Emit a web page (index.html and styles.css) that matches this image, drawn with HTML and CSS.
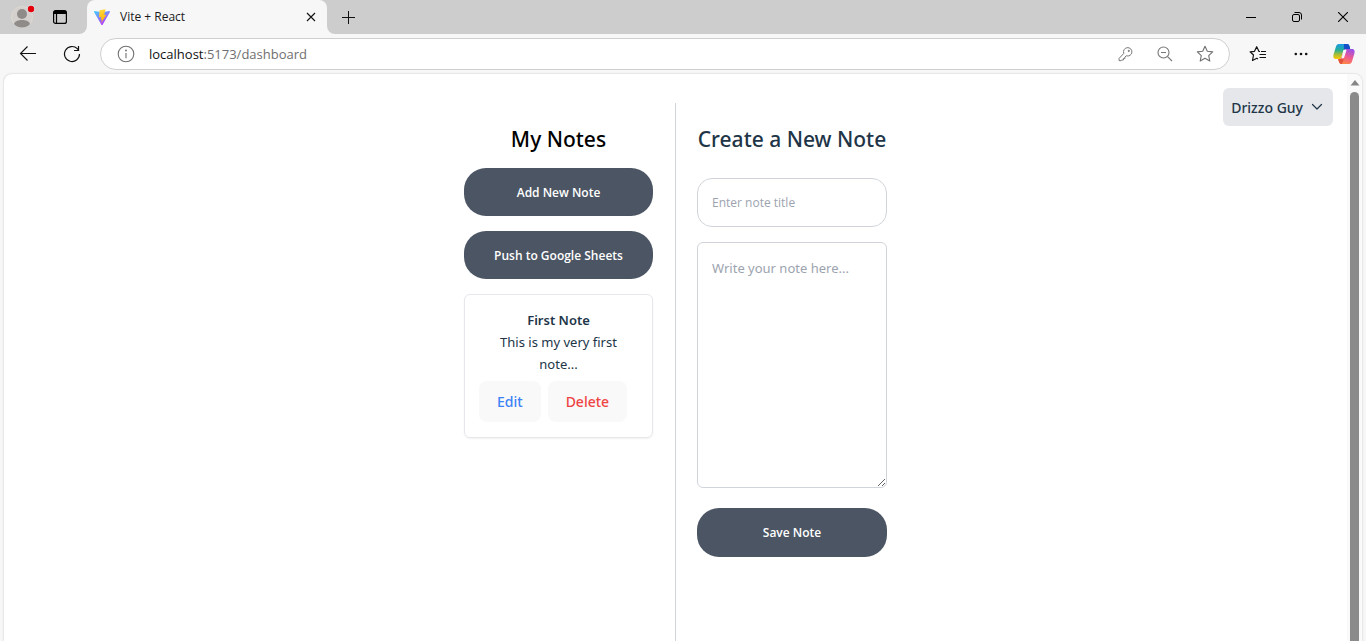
FILE: index.html
```html
<!DOCTYPE html>
<html lang="en">
<head>
<meta charset="utf-8">
<meta name="viewport" content="width=device-width, initial-scale=1">
<title>Vite + React</title>
<link rel="stylesheet" href="styles.css">
</head>
<body>
<div class="browser">
  <header class="tabstrip">
    <div class="tabstrip-tools">
      <button class="icon-btn profile" aria-label="Profile">
        <svg width="24" height="24" viewBox="0 0 24 24"><circle cx="11" cy="13" r="10.500" fill="#d3d0cd" stroke="#dfd9d2"/><circle cx="11" cy="10" r="5" fill="#8f8b88"/><path d="M3 20c1-3 4-4 8-4s7 1 8 4c-2 2-4 3.500-8 3.500S5 22 3 20z" fill="#8f8b88"/><circle cx="20" cy="5" r="4" fill="#dcdcdc"/><circle cx="20" cy="5" r="3.200" fill="#e3000b"/></svg>
      </button>
      <button class="icon-btn" aria-label="Tab actions">
        <svg width="16" height="16" viewBox="0 0 16 16"><rect x="1.600" y="1.600" width="12.800" height="12.800" rx="2" fill="none" stroke="#000" stroke-width="1.200"/><path d="M1.500 5V3.500a2 2 0 0 1 2-2h9a2 2 0 0 1 2 2V5z"/><path d="M4.500 5v9.500" stroke="#000" stroke-width="1.200"/></svg>
      </button>
    </div>
    <div class="tab">
      <svg width="16" height="16" viewBox="0 0 32 32">
        <defs>
          <linearGradient id="vite-a" x1="0" y1="0" x2=".6" y2="1"><stop stop-color="#41d1ff"/><stop offset="1" stop-color="#bd34fe"/></linearGradient>
          <linearGradient id="vite-b" x1=".4" y1="0" x2=".6" y2="1"><stop stop-color="#ffd83a"/><stop offset=".3" stop-color="#ffcc2b"/><stop offset="1" stop-color="#ffa800"/></linearGradient>
        </defs>
        <path d="M31.900 5.900 17 32q-1 1-2 0L.1 5.900Q-.3 4.200 1.600 4L16 6.500 30.400 4q1.900.2 1.500 1.900z" fill="url(#vite-a)"/>
        <path d="m23 .5-12 2.200-1 14 4.500-.9-1.200 5.800 3-.8-2.200 7.700 10.600-17-4.400.7z" fill="url(#vite-b)"/>
      </svg>
      <span class="tab-title">Vite + React</span>
      <button class="icon-btn tab-close" aria-label="Close tab"><svg width="10" height="10" viewBox="0 0 10 10" fill="none" stroke="#111" stroke-width="1.100"><path d="m1 1 8 8M9 1 1 9"/></svg></button>
    </div>
    <button class="icon-btn new-tab" aria-label="New tab"><svg width="13" height="13" viewBox="0 0 13 13" fill="none" stroke="#111"><path d="M6.500 0v13M0 6.500h13"/></svg></button>
    <div class="window-controls">
      <button class="icon-btn" aria-label="Minimize"><svg width="10" height="10" viewBox="0 0 10 10" stroke="#000"><path d="M0 5.500h10"/></svg></button>
      <button class="icon-btn" aria-label="Restore"><svg width="10" height="10" viewBox="0 0 10 10" fill="none" stroke="#000"><rect x=".5" y="2.500" width="7" height="7" rx="1.500"/><path d="M2.500.5H7A2.500 2.500 0 0 1 9.500 3v4.500"/></svg></button>
      <button class="icon-btn" aria-label="Close window"><svg width="10" height="10" viewBox="0 0 10 10" stroke="#000" stroke-width="1.100"><path d="m0 0 10 10M10 0 0 10"/></svg></button>
    </div>
  </header>

  <nav class="toolbar" aria-label="Browser toolbar">
    <button class="icon-btn nav-btn" aria-label="Back"><svg width="18" height="16" viewBox="0 0 18 16" fill="none" stroke="#111" stroke-width="1.100"><path d="M17 7.500H1.500M8.500.5l-7 7 7 7"/></svg></button>
    <button class="icon-btn nav-btn" aria-label="Refresh"><svg width="18" height="18" viewBox="0 0 18 18" fill="none" stroke="#111" stroke-width="1.200"><path d="M16.500 9A7.500 7.500 0 1 1 14.300 3.700L16 5.500M15.500 1v4.500H11"/></svg></button>
    <div class="address">
      <button class="icon-btn" aria-label="Site information"><svg width="18" height="18" viewBox="0 0 18 18" fill="none" stroke="#707070" stroke-width="1.100"><circle cx="9" cy="9" r="7.800"/><path d="M9 8v5.200"/><circle cx="9" cy="5.500" r=".4" fill="#707070"/></svg></button>
      <span class="url"><span class="url-host">localhost</span>:5173/dashboard</span>
      <div class="address-actions">
        <button class="icon-btn" aria-label="Saved passwords"><svg width="16" height="16" viewBox="0 0 16 16" fill="none" stroke="#777"><path d="M5.800 7.400A4.200 4.200 0 1 1 8.300 9.800L6.900 11v1.500H5.400V14H3.800l-.7.700H1.100v-2.300z" stroke-linejoin="round"/><circle cx="10.800" cy="4.900" r=".6" fill="#777"/></svg></button>
        <button class="icon-btn" aria-label="Zoom"><svg width="16" height="16" viewBox="0 0 16 16" fill="none" stroke="#777" stroke-width="1.100"><circle cx="6.500" cy="6.500" r="5.500"/><path d="m10.600 10.600 4.400 4.400M4 6.500h5"/></svg></button>
        <button class="icon-btn" aria-label="Add to favorites"><svg width="18" height="18" viewBox="0 0 18 18" fill="none" stroke="#707070" stroke-width="1.100" stroke-linejoin="round"><path d="m9 1.300 2.300 5 5.400.6-4 3.700 1.100 5.400L9 13.300 4.200 16l1.100-5.400-4-3.700 5.400-.6z"/></svg></button>
      </div>
    </div>
    <div class="toolbar-actions">
      <button class="icon-btn" aria-label="Favorites"><svg width="18" height="18" viewBox="0 0 18 18" fill="none" stroke="#111" stroke-width="1.200" stroke-linejoin="round"><path d="M11 6.500H10L7.700 1.700 5.500 6.300l-4.400.5L4.500 10l-1 5.500 4.300-2.200 1.200.7M12 6.500h5M10.500 9.500H17M10.500 12.500H17"/></svg></button>
      <button class="icon-btn" aria-label="Settings and more"><svg width="18" height="4" viewBox="0 0 18 4" fill="#111"><circle cx="4.800" cy="2" r="1.300"/><circle cx="10" cy="2" r="1.300"/><circle cx="15.200" cy="2" r="1.300"/></svg></button>
      <button class="icon-btn" aria-label="Copilot">
        <svg width="22" height="22" viewBox="0 0 22 22">
          <defs>
            <linearGradient id="cp-a" x1="0" y1="0" x2="0" y2="1"><stop stop-color="#1b9ae8"/><stop offset=".4" stop-color="#25ae96"/><stop offset=".7" stop-color="#a8bd35"/><stop offset="1" stop-color="#ffc900"/></linearGradient>
            <linearGradient id="cp-b" x1=".7" y1="0" x2=".3" y2="1"><stop stop-color="#9a50e8"/><stop offset=".5" stop-color="#ee5a91"/><stop offset="1" stop-color="#ff8b3e"/></linearGradient>
          </defs>
          <path d="M6 1h8c2 0 2.600 1.500 3.200 5H13c-2 0-2.500 1-3 3l-1.600 5c-.5 1.500-1.300 2-2.700 2H3c-2.500 0-3-2-2.500-4.500L3 3.500C3.500 2 4.200 1 6 1z" fill="url(#cp-a)"/>
          <path d="M11 1h3c2 0 2.600 1.500 3.200 5H13c-1 0-1.700.3-2.100.9z" fill="#1650c8"/>
          <path d="M16 21H8.500C6.500 21 6 19.500 5.200 16H6c1.400 0 2.200-.5 2.700-2L10 9.500 13 6h5.700c2.800 0 3.300 2 2.700 4.500L19 18.500c-.5 1.500-1.200 2.500-3 2.500z" fill="url(#cp-b)"/>
          <path d="M5.200 16H6c1.400 0 2.200-.5 2.700-2l2 2.500L9 21h-.5C6.500 21 6 19.500 5.200 16z" fill="#e2523c"/>
          <path d="M10.500 7h3l-2 6.500c-.4 1.300-1 1.900-2.200 1.900H8.200c.4-.4.600-.9.800-1.600z" fill="#faf6fa"/>
        </svg>
      </button>
    </div>
  </nav>

  <div class="viewport">
    <div class="page">
      <main class="dashboard">
        <section class="panel notes">
          <h2 class="heading heading-notes">My Notes</h2>
          <button class="btn">Add New Note</button>
          <button class="btn">Push to Google Sheets</button>
          <article class="note">
            <h3 class="note-title">First Note</h3>
            <p class="note-text">This is my very first note...</p>
            <div class="note-actions">
              <button class="note-btn edit">Edit</button>
              <button class="note-btn delete">Delete</button>
            </div>
          </article>
        </section>
        <section class="panel create">
          <h2 class="heading">Create a New Note</h2>
          <form class="form">
            <input class="field title-field" type="text" placeholder="Enter note title" aria-label="Note title">
            <textarea class="field body-field" placeholder="Write your note here..." aria-label="Note text"></textarea>
            <button class="btn save" type="button">Save Note</button>
          </form>
        </section>
      </main>
      <button class="account">Drizzo Guy
        <svg width="12" height="8" viewBox="0 0 12 8" fill="none" stroke="#213547" stroke-width="1.200" stroke-linecap="round" stroke-linejoin="round"><path d="m1.500 1.500 4.500 4.500 4.500-4.500"/></svg>
      </button>
    </div>
    <div class="scrollbar" aria-hidden="true">
      <svg width="10" height="6" viewBox="0 0 10 6"><path d="M5 0 9.500 5.500h-9z" fill="#858585"/></svg>
      <div class="scroll-thumb"></div>
    </div>
  </div>
</div>
</body>
</html>
```
FILE: styles.css
```css
*, *::before, *::after { box-sizing: border-box; }

body {
  margin: 0;
  font-family: "Noto Sans", "Open Sans", sans-serif;
  color: #213547;
  background: #f7f7f7;
}

h2, h3, p { margin: 0; }

button, input, textarea { font-family: inherit; }

.browser {
  display: flex;
  flex-direction: column;
  height: 100vh;
  overflow: hidden;
}

.icon-btn {
  display: flex;
  align-items: center;
  justify-content: center;
  padding: 0;
  border: 0;
  background: none;
}

.icon-btn svg { display: block; }

/* Tab strip */
.tabstrip {
  position: relative;
  z-index: 0;
  display: flex;
  flex: none;
  height: 34px;
  background: #f7f7f7;
}

.tabstrip-tools {
  display: flex;
  align-items: center;
  gap: 17px;
  width: 87px;
  padding-left: 11px;
  background: #cdcdcd;
  border-bottom-right-radius: 8px;
}

.profile { padding-bottom: 2px; }

.tab {
  position: relative;
  display: flex;
  align-items: center;
  gap: 10px;
  width: 240px;
  padding: 0 11px 0 7px;
  background: #f7f7f7;
  border-radius: 8px 8px 0 0;
}

.tab::before {
  content: "";
  position: absolute;
  inset: 0 0 16px;
  z-index: -1;
  background: #cdcdcd;
}

.tab-title {
  font-family: "Open Sans", "Noto Sans", sans-serif;
  font-size: 12px;
  line-height: 16px;
  color: #1b1b1b;
}

.tab-close { margin-left: auto; }

.new-tab {
  width: 43px;
  background: #cdcdcd;
  border-bottom-left-radius: 8px;
}

.window-controls {
  display: flex;
  flex: 1;
  justify-content: flex-end;
  background: #cdcdcd;
}

.window-controls .icon-btn { width: 46px; }

/* Toolbar */
.toolbar {
  display: flex;
  flex: none;
  align-items: center;
  height: 40px;
  padding: 0 11px 0 6px;
}

.nav-btn { width: 44px; }
.nav-btn + .nav-btn { margin-right: 6px; }

.address {
  display: flex;
  flex: 1;
  align-items: center;
  gap: 14px;
  height: 32px;
  padding: 0 15px 0 16px;
  border: 1px solid #cfcfcf;
  border-radius: 16px;
  background: #fff;
}

.url {
  font-family: "Open Sans", "Noto Sans", sans-serif;
  font-size: 13px;
  line-height: 20px;
  color: #6f6f6f;
}

.url-host { color: #111; }

.address-actions {
  display: flex;
  align-items: center;
  gap: 23px;
  margin-left: auto;
}

.toolbar-actions {
  display: flex;
  align-items: center;
  gap: 24px;
  padding-left: 19px;
}

/* Page area */
.viewport {
  display: flex;
  flex: 1;
  min-height: 0;
  margin: 0 4px;
  background: #fff;
  border-radius: 8px 8px 0 0;
  box-shadow: 0 0 2px #bdbdbd;
}

.page {
  display: grid;
  flex: 1;
  grid-template-columns: 1fr auto 1fr;
  padding: 0 14px;
}

.dashboard {
  display: flex;
  grid-column: 2;
  margin-top: 29px;
}

.panel {
  display: flex;
  flex-direction: column;
  padding-top: 22px;
}

.notes {
  width: 212px;
  gap: 15px;
  padding-right: 22px;
  border-right: 1px solid #d1d5db;
}

.create {
  width: 211px;
  padding-left: 21px;
}

.heading {
  font-size: 21px;
  font-weight: 500;
  line-height: 28px;
  text-align: center;
  white-space: nowrap;
}

.heading-notes { color: #000; }

.btn {
  flex: none;
  width: 100%;
  height: 48px;
  padding: 0;
  border: 0;
  border-radius: 22px;
  background: #4b5563;
  color: #fff;
  font-family: "Open Sans", "Noto Sans", sans-serif;
  font-size: 12px;
  font-weight: 600;
}

.note {
  padding: 14px 14px 15px;
  border: 1px solid #e5e7eb;
  border-radius: 6px;
  box-shadow: 0 1px 2px rgba(0, 0, 0, 0.06);
  text-align: center;
}

.note-title {
  font-size: 13px;
  font-weight: 600;
  line-height: 22px;
}

.note-text {
  padding: 0 8px;
  font-size: 13px;
  line-height: 22px;
}

.note-actions {
  display: flex;
  gap: 7px;
  margin-top: 6px;
}

.note-btn {
  height: 41px;
  padding: 0 18px;
  border: 0;
  border-radius: 8px;
  background: #f9f9f9;
  font-size: 14px;
  font-weight: 500;
}

.edit { color: #3b82f6; }
.delete { color: #ef4444; }

.form {
  display: flex;
  flex-direction: column;
  margin-top: 25px;
}

.field {
  width: 100%;
  padding: 0 14px;
  border: 1px solid #d1d5db;
  background: #fff;
  color: #213547;
}

.field::placeholder { color: #9ca3af; opacity: 1; }

.title-field {
  height: 49px;
  border-radius: 15px;
  font-family: "Open Sans", "Noto Sans", sans-serif;
  font-size: 12px;
}

.body-field {
  height: 246px;
  margin-top: 15px;
  padding-top: 14px;
  border-radius: 6px;
  font-size: 13px;
  line-height: 22px;
}

.save {
  height: 49px;
  margin-top: 20px;
}

.account {
  display: flex;
  align-items: center;
  justify-self: end;
  gap: 8px;
  height: 38px;
  margin-top: 14px;
  padding: 0 10px 0 8px;
  border: 0;
  border-radius: 6px;
  background: #e5e7eb;
  color: #213547;
  font-size: 14px;
  font-weight: 500;
}

.scrollbar {
  display: flex;
  flex-direction: column;
  align-items: center;
  gap: 6px;
  width: 15px;
  padding-top: 6px;
  background: #fafafa;
  border-top-right-radius: 8px;
}

.scrollbar svg { flex: none; }

.scroll-thumb {
  flex: 1;
  width: 9px;
  border-radius: 5px 5px 0 0;
  background: #8b8b8b;
}
```
